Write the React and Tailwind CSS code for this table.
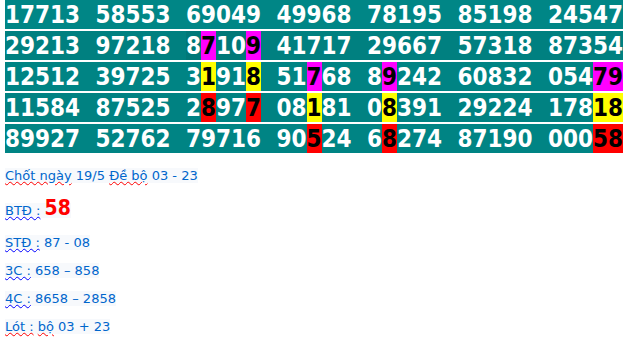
const rows = [
  { bg: "bg-[#008686]", cells: ["17713", "58553", "69049", "49968", "78195", "85198", "24547"] },
  { bg: "bg-[#008080]", cells: ["29213", "97218", "8m7 1 0m9", "41717", "29667", "57318", "87354"] },
  { bg: "bg-[#008484]", cells: ["12512", "39725", "3y1 9 1y8", "5 1m7 6 8", "8m9 2 4 2", "60832", "0 5 4m7m9"] },
  { bg: "bg-[#008282]", cells: ["11584", "87525", "2r8 9 7r7", "0 8y1 8 1", "0y8 3 9 1", "29224", "1 7 8y1y8"] },
  { bg: "bg-[#008484]", cells: ["89927", "52762", "79716", "9 0r5 2 4", "6r8 2 7 4", "87190", "0 0 0r5r8"] },
];

const hl = {
  m: "bg-[#ff00ff] text-black",
  y: "bg-[#ffff00] text-black",
  r: "bg-[#ff0000] text-black",
};

// "8m7 1 0m9" -> digits with optional colour prefix, space separated; plain "17713" -> all white
function parseCell(s) {
  if (!s.includes(" ") && !/[myr]/.test(s)) return s.split("").map((d) => ({ d }));
  return s.split(" ").flatMap((tok) => {
    const out = [];
    let i = 0;
    while (i < tok.length) {
      if (hl[tok[i]]) {
        out.push({ d: tok[i + 1], c: tok[i] });
        i += 2;
      } else {
        out.push({ d: tok[i] });
        i += 1;
      }
    }
    return out;
  });
}

function Cell({ value, dark }) {
  return (
    <div className={`flex h-full ${dark ? "bg-[#007878]" : ""}`}>
      {parseCell(value).map((g, i) => (
        <span
          key={i}
          className={`w-[15px] h-full flex items-center justify-center ${g.c ? hl[g.c] : "text-white"}`}
        >
          {g.d}
        </span>
      ))}
    </div>
  );
}

function Wavy({ color, children }) {
  return (
    <span className={`underline decoration-wavy decoration-1 underline-offset-1 ${color}`}>{children}</span>
  );
}

export default function App() {
  return (
    <div className="w-[629px] h-[340px] bg-white overflow-hidden">
      {/* bảng kết quả */}
      <div className="ml-[5px] w-[618px] flex flex-col gap-[2px] font-['DejaVu_Sans_Condensed','DejaVu_Sans',sans-serif] font-bold text-[24px] leading-none">
        {rows.map((row, r) => (
          <div key={r} className={`h-[29px] flex gap-[15.5px] ${row.bg}`}>
            {row.cells.map((c, i) => (
              <Cell key={i} value={c} dark={r === 1 && i === 2} />
            ))}
          </div>
        ))}
      </div>

      {/* chốt số */}
      <div className="pl-[5px] text-[13px] leading-[16px] text-[#0066cc] font-['DejaVu_Sans',Verdana,sans-serif]">
        <div className="mt-[15px] h-[16px]">
          <span className="bg-[#f7f9fc]">
            <Wavy color="decoration-[#ff0000]">Chốt ngày</Wavy> 19/5 <Wavy color="decoration-[#ff0000]">Đề bộ</Wavy> 03 - 23
          </span>
        </div>
        <div className="mt-[16px] h-[16px] whitespace-nowrap">
          <span className="bg-[#f7f9fc]">
            <Wavy color="decoration-[#0000ff]">BTĐ :</Wavy>{" "}
            <span className="text-[#ff0000] font-bold text-[21px] leading-[16px] font-['DejaVu_Sans_Condensed','DejaVu_Sans',sans-serif]">
              58
            </span>
          </span>
        </div>
        <div className="mt-[19px] h-[16px]">
          <span className="bg-[#f7f9fc]">
            <Wavy color="decoration-[#0000ff]">STĐ :</Wavy> 87 - 08
          </span>
        </div>
        <div className="mt-[12px] h-[16px]">
          <span className="bg-[#f7f9fc]">
            <Wavy color="decoration-[#0000ff]">3C :</Wavy> 658 – 858
          </span>
        </div>
        <div className="mt-[12px] h-[16px]">
          <span className="bg-[#f7f9fc]">
            <Wavy color="decoration-[#0000ff]">4C :</Wavy> 8658 – 2858
          </span>
        </div>
        <div className="mt-[12px] h-[16px]">
          <span className="bg-[#f7f9fc]">
            <Wavy color="decoration-[#ff0000]">Lót :</Wavy> <Wavy color="decoration-[#ff0000]">bộ</Wavy> 03 + 23
          </span>
        </div>
      </div>
    </div>
  );
}
